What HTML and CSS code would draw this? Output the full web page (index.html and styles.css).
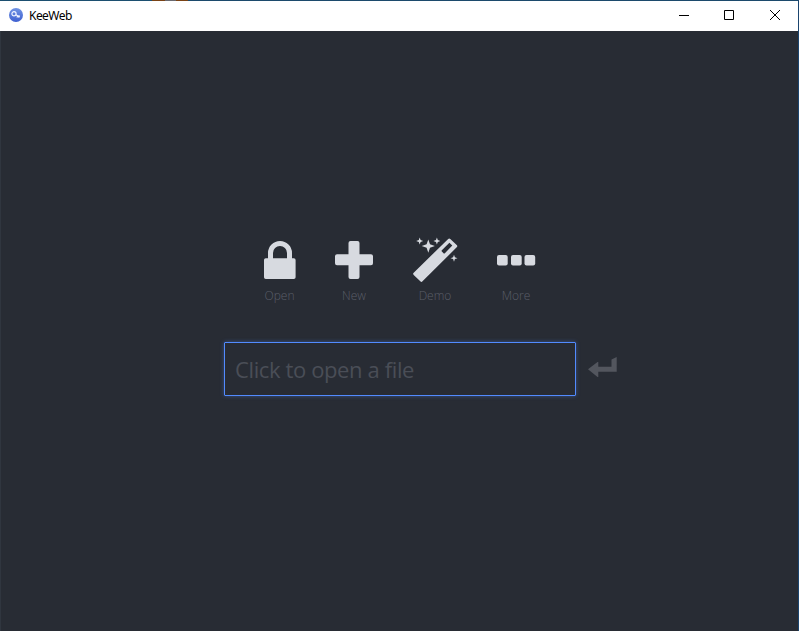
FILE: index.html
```html
<!DOCTYPE html>
<html lang="en">
<head>
<meta charset="utf-8">
<title>KeeWeb</title>
<link rel="stylesheet" href="styles.css">
</head>
<body>
<div class="window">
  <div class="edge"></div>
  <header class="titlebar">
    <svg class="logo" width="14" height="14" viewBox="0 0 14 14">
      <defs><linearGradient id="g" x1="0" y1="0" x2="0" y2="1"><stop offset="0" stop-color="#7194e4"/><stop offset="1" stop-color="#3e5fd0"/></linearGradient></defs>
      <circle cx="7" cy="7" r="7" fill="url(#g)"/>
      <g fill="none" stroke="#eef2ff" stroke-width="1.2"><circle cx="5" cy="5.800" r="2.100"/><path d="M6.800 6.700l4 2.200M8.800 7.800l-.9 1.700M10.400 7.400l-.8 2.200"/></g>
    </svg>
    <span class="title">KeeWeb</span>
    <div class="controls">
      <svg width="10" height="10" viewBox="0 0 10 10"><path d="M0 5.500h10"/></svg>
      <svg width="10" height="10" viewBox="0 0 10 10"><path d="M.5.5h9v9h-9z"/></svg>
      <svg width="10" height="10" viewBox="0 0 10 10"><path d="M0 0l10 10M10 0L0 10"/></svg>
    </div>
  </header>
  <main class="open">
    <nav class="actions">
      <div class="action lock">
        <svg width="48" height="48" viewBox="0 0 48 48"><path fill-rule="evenodd" d="M9.800 18.200H12V13a12 12 0 0 1 24 0v5.200h1.800a1.800 1.800 0 0 1 1.800 1.800v17.200a1.800 1.800 0 0 1-1.800 1.800H9.800a1.800 1.800 0 0 1-1.800-1.800V20a1.800 1.800 0 0 1 1.800-1.800zm7.200 0h14V13a7 7 0 0 0-14 0z"/></svg>
        <span>Open</span>
      </div>
      <div class="action plus">
        <svg width="48" height="48" viewBox="0 0 48 48"><path d="M20.500 1h7a2 2 0 0 1 2 2v11.300H41a2 2 0 0 1 2 2v7a2 2 0 0 1-2 2H29.500V37a2 2 0 0 1-2 2h-7a2 2 0 0 1-2-2V25.300H7a2 2 0 0 1-2-2v-7a2 2 0 0 1 2-2H18.500V3a2 2 0 0 1 2-2z"/></svg>
        <span>New</span>
      </div>
      <div class="action wand">
        <svg width="48" height="48" viewBox="0 0 48 48"><path fill-rule="evenodd" d="M37.200-1.100a1.500 1.500 0 0 1 2.100 0L45.700 5.100a1.500 1.500 0 0 1 0 2.200L11.500 41.300a1.500 1.500 0 0 1-2.200 0L2.700 34.900a1.500 1.500 0 0 1 0-2.200zM38.400 2.700L30.600 10.400v.8l2.200 2.200h.8L41.300 5.600z"/><path d="M17.300-.6l1.700 4.800 4.900 1.800-4.900 1.700-1.700 5-1.700-5-4.900-1.700 4.900-1.800zM8.700-2.500l.9 2.600 2.600.9-2.600.9-.9 2.600-.9-2.600L5.200 1l2.600-.9zM25.900-2.500l.9 2.600 2.600.9-2.600.9-.9 2.600-.9-2.600L22.400 1l2.600-.9zM43 14.700l.9 2.600 2.600.9-2.600.9-.9 2.600-.9-2.600-2.600-.9 2.600-.9z"/></svg>
        <span>Demo</span>
      </div>
      <div class="action more">
        <svg width="48" height="48" viewBox="0 0 48 48"><rect x="5" y="15" width="10.700" height="10.500" rx="2"/><rect x="19" y="15" width="10.700" height="10.500" rx="2"/><rect x="32.500" y="15" width="10.700" height="10.500" rx="2"/></svg>
        <span>More</span>
      </div>
    </nav>
    <div class="field">
      <div class="input"><span>Click to open a file</span></div>
      <svg class="enter" width="30" height="22" viewBox="0 0 30 22"><path d="M0 12.300L9.500 5h.8v4.800H23.500V2.500L28.700 0v14.700H10.300V20h-.8z"/></svg>
    </div>
  </main>
</div>
</body>
</html>
```
FILE: styles.css
```css
* { box-sizing: border-box; }
body { margin: 0; background: #282c34; font-family: "Open Sans", "Noto Sans", sans-serif; }
.window {
  height: 631px;
  display: flex;
  flex-direction: column;
  border-right: 1px solid #1b456f;
}
.edge {
  height: 1px;
  flex: none;
  background: linear-gradient(90deg, #1c4f70 152px, #7a4316 152px 165px, #6a6a70 165px 176px, #7a4316 176px 188px, #1c4a6c 188px);
}
.titlebar {
  height: 30px;
  flex: none;
  display: flex;
  align-items: center;
  background: #fff;
  padding-left: 9px;
}
.logo { margin-top: -2px; }
.title { margin-left: 6px; font: 12px/16px "Noto Sans", sans-serif; letter-spacing: -0.55px; color: #000; }
.controls { margin: -2px 18px 0 auto; display: flex; gap: 35px; }
.controls svg { display: block; fill: none; stroke: #000; stroke-width: 1; }
.controls svg:nth-child(3) { margin-left: 1px; }
.open {
  flex: 1;
  padding: 209px 0 0;
  border-left: 1px solid #30363f;
}
.actions { display: flex; padding-left: 241px; height: 102px; }
.action {
  display: flex;
  flex-direction: column;
  align-items: center;
  width: 74px;
  font-size: 12px;
  font-weight: 300;
  line-height: 16px;
  color: #5a5e68;
}
.lock { width: 75px; }
.wand { width: 88px; }
.action svg { display: block; fill: #d7dae0; overflow: visible; }
.field { display: flex; padding-left: 223px; }
.input {
  width: 352px;
  height: 54px;
  border: 1px solid #528bff;
  border-radius: 1px;
  box-shadow: 0 0 4px rgba(82, 139, 255, .4);
  padding: 9px 10px;
  font-size: 22px;
  letter-spacing: -0.38px;
  line-height: 34px;
  color: #4a4e57;
  white-space: nowrap;
}
.enter { margin: 15px 0 0 12px; fill: #53565e; }
```
